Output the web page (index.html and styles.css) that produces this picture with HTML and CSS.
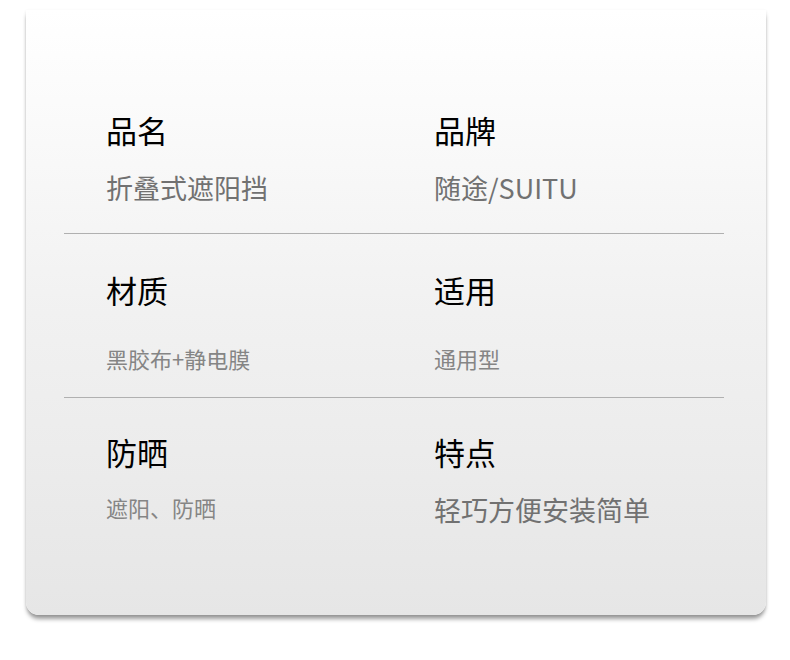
FILE: index.html
```html
<!DOCTYPE html>
<html lang="zh-CN">
<head>
<meta charset="utf-8">
<link rel="stylesheet" href="styles.css">
</head>
<body>
<div class="card">
  <div class="row row-1">
    <div class="cell">
      <div class="label">品名</div>
      <div class="value">折叠式遮阳挡</div>
    </div>
    <div class="cell">
      <div class="label">品牌</div>
      <div class="value">随途/SUITU</div>
    </div>
  </div>
  <div class="row row-2">
    <div class="cell">
      <div class="label">材质</div>
      <div class="value small">黑胶布+静电膜</div>
    </div>
    <div class="cell">
      <div class="label">适用</div>
      <div class="value small">通用型</div>
    </div>
  </div>
  <div class="row row-3">
    <div class="cell">
      <div class="label">防晒</div>
      <div class="value small">遮阳、防晒</div>
    </div>
    <div class="cell">
      <div class="label">特点</div>
      <div class="value">轻巧方便安装简单</div>
    </div>
  </div>
</div>
</body>
</html>
```
FILE: styles.css
```css
html, body {
  margin: 0;
  padding: 0;
  background: #ffffff;
}
body {
  font-family: "Noto Sans CJK SC", "Noto Sans", sans-serif;
  width: 790px;
  height: 660px;
  overflow: hidden;
}
.card {
  box-sizing: border-box;
  margin: 10px 0 0 26px;
  width: 740px;
  height: 605px;
  border-radius: 0 0 13px 13px;
  background: linear-gradient(to bottom, #ffffff 0%, #fbfbfb 15%, #f1f1f1 50%, #e6e6e6 100%);
  box-shadow: 0 5px 4px -1px rgba(0, 0, 0, 0.38), 0 1px 3px rgba(0, 0, 0, 0.10);
  padding: 0 42px 0 38px;
}
.row {
  display: grid;
  grid-template-columns: 328px 1fr;
  padding-left: 42px;
}
.row-1 {
  padding-top: 99px;
  padding-bottom: 27px;
  border-bottom: 1px solid #b0b0b0;
}
.row-2 {
  padding-top: 35px;
  padding-bottom: 24px;
  border-bottom: 1px solid #b0b0b0;
}
.row-3 {
  padding-top: 33px;
}
.cell {
  display: flex;
  flex-direction: column;
  gap: 19px;
}
.row-2 .cell {
  gap: 32px;
}
.label {
  font-size: 31px;
  line-height: 42px;
  font-weight: 400;
  color: #000000;
}
.value {
  font-size: 27px;
  line-height: 36px;
  color: #717171;
}
.value.small {
  font-size: 22px;
  line-height: 30px;
  color: #858585;
}
```
